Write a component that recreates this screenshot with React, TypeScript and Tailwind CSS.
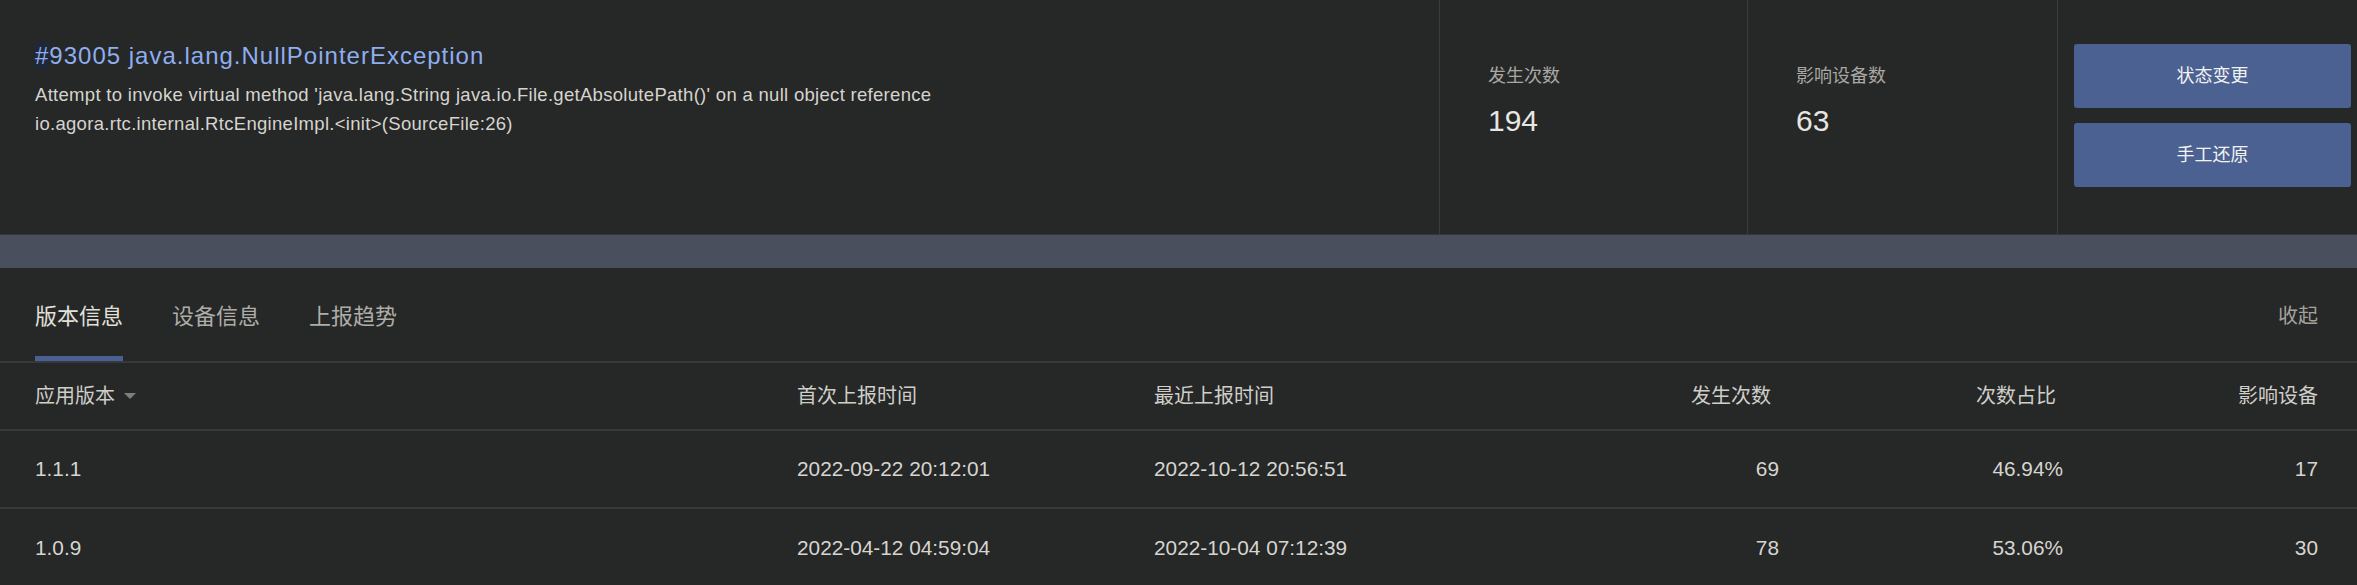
import React from "react";

const FONT = { fontFamily: '"Liberation Sans", "Noto Sans CJK SC", sans-serif' };

const rows = [
  { ver: "1.1.1", first: "2022-09-22 20:12:01", last: "2022-10-12 20:56:51", count: "69", ratio: "46.94%", dev: "17" },
  { ver: "1.0.9", first: "2022-04-12 04:59:04", last: "2022-10-04 07:12:39", count: "78", ratio: "53.06%", dev: "30" },
];

function Stat({ label, value, width }: { label: string; value: string; width: string }) {
  return (
    <div className={`${width} border-r border-[#3a3b3c] pl-[48px] pt-[63px]`}>
      <div className="text-[18px] leading-[26px] text-[#a9a8a3]">{label}</div>
      <div className="mt-[14px] text-[30px] leading-[36px] text-[#e8e6e0]">{value}</div>
    </div>
  );
}

export default function App() {
  return (
    <div className="w-[2357px] h-[585px] overflow-hidden bg-[#262727]" style={FONT}>
      {/* Top panel */}
      <div className="flex h-[234px]">
        <div className="flex-1 border-r border-[#3a3b3c] pl-[35px] pt-[40px]">
          <div className="text-[24px] leading-[32px] tracking-[1px] text-[#8eaef0]">
            <span className="bg-[#1e283b]">#</span>93005 java.lang.NullPointerException
          </div>
          <div className="mt-[8px] text-[18.5px] leading-[29px] tracking-[0.3px] text-[#d6d4ce]">
            <div>Attempt to invoke virtual method 'java.lang.String java.io.File.getAbsolutePath()' on a null object reference</div>
            <div>io.agora.rtc.internal.RtcEngineImpl.&lt;init&gt;(SourceFile:26)</div>
          </div>
        </div>
        <Stat label="发生次数" value="194" width="w-[308px]" />
        <Stat label="影响设备数" value="63" width="w-[310px]" />
        <div className="w-[299px] pl-[16px] pr-[6px] pt-[44px] flex flex-col gap-[15px]">
          <button className="h-[64px] w-full rounded-[3px] bg-[#4a6191] text-[18px] text-[#f2f2f2]">状态变更</button>
          <button className="h-[64px] w-full rounded-[3px] bg-[#4a6191] text-[18px] text-[#f2f2f2]">手工还原</button>
        </div>
      </div>

      {/* Band */}
      <div className="h-[34px] bg-[#4a4f5d] border-t border-[#34363b]" />

      {/* Bottom panel */}
      <div>
        <div className="flex h-[95px] items-stretch border-b-2 border-[#38393a] pl-[35px] pr-[39px]">
          <div className="flex gap-[49px]">
            <div className="flex items-center pt-[8px] border-b-[5px] border-[#4a5f92] text-[22px] text-[#e2e0da]">版本信息</div>
            <div className="flex items-center pt-[8px] border-b-[5px] border-transparent text-[22px] text-[#aeada8]">设备信息</div>
            <div className="flex items-center pt-[8px] border-b-[5px] border-transparent text-[22px] text-[#aeada8]">上报趋势</div>
          </div>
          <div className="ml-auto flex items-center pt-[8px] pb-[5px] text-[20px] text-[#a3a29d]">收起</div>
        </div>

        <div className="grid grid-cols-[762px_357px_1fr_200px_284px_255px] h-[68px] items-center border-b-2 border-[#38393a] pl-[35px] pr-[39px] text-[20px] text-[#cfcec9]">
          <div className="flex items-center">
            <span>应用版本</span>
            <svg className="ml-[9px]" width="12" height="6" viewBox="0 0 12 6">
              <polygon points="0,0 12,0 6,6" fill="#7f7e7a" />
            </svg>
          </div>
          <div>首次上报时间</div>
          <div>最近上报时间</div>
          <div className="text-right pr-[8px]">发生次数</div>
          <div className="text-right pr-[7px]">次数占比</div>
          <div className="text-right">影响设备</div>
        </div>

        {rows.map((r, i) => (
          <div
            key={r.ver}
            className={`grid grid-cols-[762px_357px_1fr_200px_284px_255px] h-[78px] items-center pl-[35px] pr-[39px] text-[20.8px] text-[#d6d5d0] ${i === 0 ? "border-b-2 border-[#38393a]" : ""}`}
          >
            <div>{r.ver}</div>
            <div>{r.first}</div>
            <div>{r.last}</div>
            <div className="text-right">{r.count}</div>
            <div className="text-right">{r.ratio}</div>
            <div className="text-right">{r.dev}</div>
          </div>
        ))}
      </div>
    </div>
  );
}
